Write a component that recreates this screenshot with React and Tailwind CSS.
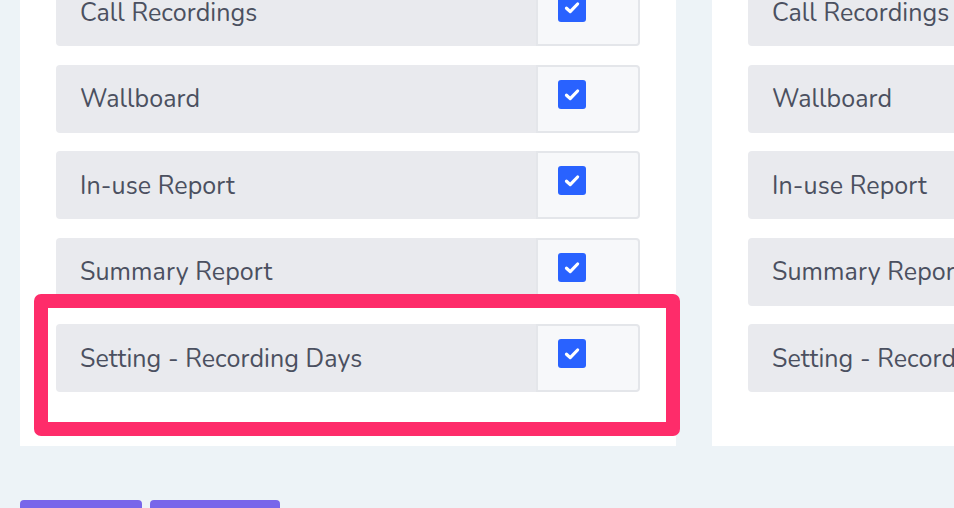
import React from "react";

const rows = ["Call Recordings", "Wallboard", "In-use Report", "Summary Report", "Setting - Recording Days"];

function Check() {
  return (
    <div className="w-[28px] h-[29px] mt-[13px] ml-[20px] rounded-[3px] bg-[#2962ff] flex items-center justify-center">
      <svg width="28" height="29" viewBox="0 0 28 29">
        <path d="M8.5 15.2 L12.2 18.6 L19.6 11" fill="none" stroke="#ffffff" strokeWidth="3.2" strokeLinecap="round" strokeLinejoin="round" />
      </svg>
    </div>
  );
}

function Row({ label, withCheck }) {
  return (
    <div className="flex h-[68px]">
      <div className="flex-1 flex items-center pl-[24px] pt-[3px] bg-[#e9eaee] rounded-l-[4px] text-[25px] tracking-[0.1px] text-[#4b5060] whitespace-nowrap overflow-hidden">
        {label}
      </div>
      {withCheck && (
        <div className="w-[104px] shrink-0 bg-[#f7f8fa] border-2 border-[#e4e6ea] rounded-r-[4px] flex items-start">
          <Check />
        </div>
      )}
    </div>
  );
}

function Card({ withCheck, highlight }) {
  return (
    <div className="relative w-[656px] shrink-0 bg-white px-[36px] pb-[54px] flex flex-col gap-[18.5px]">
      {rows.map((r) => (
        <Row key={r} label={r} withCheck={withCheck} />
      ))}
      {highlight && (
        <div className="absolute left-[14px] top-[316px] w-[646px] h-[142px] border-[14px] border-[#fe2c6a] rounded-[7px]" />
      )}
    </div>
  );
}

export default function App() {
  return (
    <div
      className="w-[954px] h-[508px] overflow-hidden bg-[#edf3f7]"
      style={{ fontFamily: "Nunito, Lato, 'Open Sans', sans-serif" }}
    >
      <div className="pl-[20px] -mt-[22px]">
        <div className="flex gap-[36px]">
          <Card withCheck highlight />
          <Card withCheck />
        </div>
        <div className="flex gap-[8px] mt-[54px]">
          <div className="w-[122px] h-[36px] rounded-[4px] bg-[#7866ea]" />
          <div className="w-[130px] h-[36px] rounded-[4px] bg-[#7866ea]" />
        </div>
      </div>
    </div>
  );
}
